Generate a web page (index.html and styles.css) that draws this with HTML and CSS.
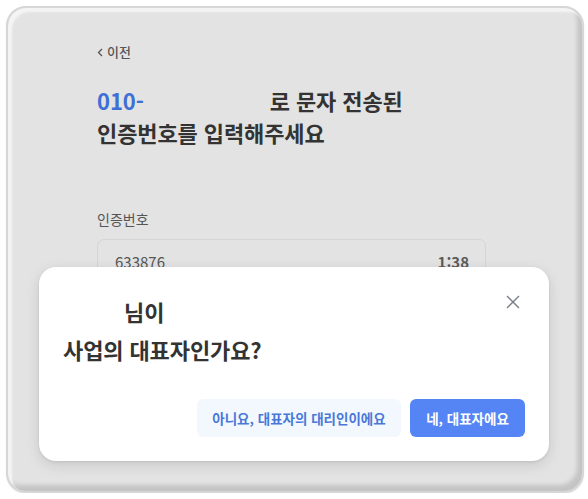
FILE: index.html
```html
<!DOCTYPE html>
<html lang="ko">
<head>
<meta charset="utf-8">
<link rel="stylesheet" href="styles.css">
</head>
<body>
<div class="frame">
  <div class="page">
    <div class="back"><svg class="chev" width="6" height="9" viewBox="0 0 6 9"><path d="M5 1 L1.5 4.5 L5 8" fill="none" stroke="#555" stroke-width="1.3"/></svg>이전</div>
    <h1 class="title"><span class="phone">010-</span><span class="blank"></span>로 문자 전송된<br>인증번호를 입력해주세요</h1>
    <div class="label">인증번호</div>
    <div class="input"><span>633876</span><span class="timer">1:38</span></div>
  </div>
  <div class="modal">
    <button class="close" aria-label="닫기"><svg width="14" height="14" viewBox="0 0 14 14"><path d="M1 1 L13 13 M13 1 L1 13" stroke="#7a7e87" stroke-width="1.4" fill="none"/></svg></button>
    <div class="mtitle"><span class="name"></span>님이<br>사업의 대표자인가요?</div>
    <div class="actions">
      <button class="btn ghost">아니요, 대표자의 대리인이에요</button>
      <button class="btn primary">네, 대표자에요</button>
    </div>
  </div>
</div>
</body>
</html>
```
FILE: styles.css
```css
* { box-sizing: border-box; }
html, body { margin: 0; padding: 0; background: #ffffff; }
body {
  font-family: "Noto Sans CJK KR", "Noto Sans", sans-serif;
  color: #333;
}
.frame {
  position: relative;
  margin: 6px 0 0 6px;
  width: 578px;
  height: 487px;
  border-radius: 20px;
  border: 2px solid #d6d6d6;
  background: #e3e3e3;
  box-shadow: inset 4px 4px 2px #f4f4f4, inset -5px -6px 4px #c4c4c4, 0 1px 2px rgba(0,0,0,0.08);
  overflow: hidden;
}
.page {
  padding: 36px 0 0 89px;
}
.back {
  display: flex;
  align-items: center;
  gap: 4px;
  font-size: 13px;
  line-height: 16px;
  color: #555;
  font-weight: 500;
}
.title {
  margin: 24px 0 0 0;
  font-size: 22px;
  line-height: 32px;
  font-weight: 700;
  color: #333;
  letter-spacing: -0.1px;
}
.phone { color: #3d6fd6; }
.blank { display: inline-block; width: 126px; }
.label {
  margin-top: 63px;
  font-size: 14px;
  line-height: 16px;
  color: #555;
}
.input {
  margin-top: 12px;
  width: 389px;
  height: 48px;
  border: 1px solid #d5d5d5;
  border-radius: 7px;
  display: flex;
  justify-content: space-between;
  padding: 12px 16px 0 17px;
  font-size: 15px;
  line-height: 20px;
  color: #555;
}
.timer { font-weight: 600; color: #5a5a5a; }
.modal {
  position: absolute;
  left: 31px;
  top: 259px;
  width: 510px;
  height: 194px;
  background: #fff;
  border-radius: 17px;
  box-shadow: 0 4px 14px rgba(0,0,0,0.12), 0 1px 3px rgba(0,0,0,0.08);
  padding: 25px 24px 24px 24px;
  display: flex;
  flex-direction: column;
}
.close {
  position: absolute;
  top: 28px;
  right: 29px;
  border: 0;
  background: none;
  padding: 0;
  width: 14px;
  height: 14px;
  display: block;
}
.close svg { display: block; }
.mtitle {
  font-size: 22px;
  line-height: 38px;
  font-weight: 700;
  color: #333;
  letter-spacing: -0.1px;
}
.name { display: inline-block; width: 61px; }
.actions {
  margin-top: auto;
  display: flex;
  justify-content: flex-end;
  gap: 9px;
}
.btn {
  font-family: inherit;
  border: 0;
  border-radius: 6px;
  height: 38px;
  font-size: 13.5px;
  font-weight: 700;
  padding: 0 10px;
}
.ghost { background: #f3f8fe; color: #4a78d8; width: 204px; }
.primary { background: #5585f4; color: #fff; width: 115px; }
```
